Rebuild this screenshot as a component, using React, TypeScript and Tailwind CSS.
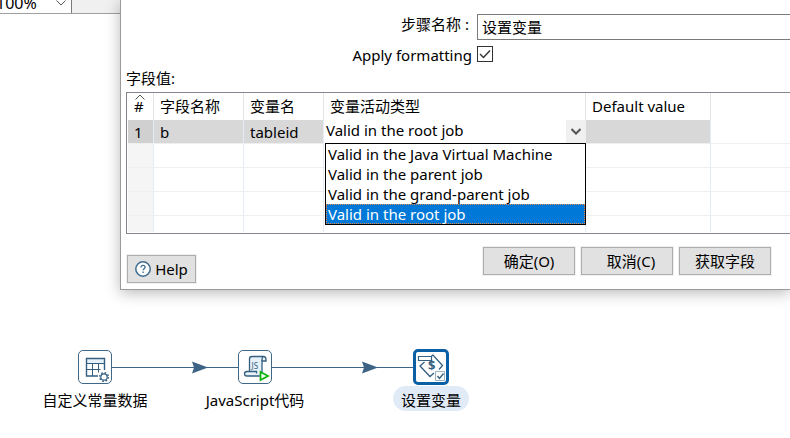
import type { ReactNode } from "react";

const scopes = [
  "Valid in the Java Virtual Machine",
  "Valid in the parent job",
  "Valid in the grand-parent job",
  "Valid in the root job",
];

const headCell = "relative border-r border-[#e5e5e5] px-[6px] pb-px text-left font-normal";
const bodyCell = "border-r border-b border-r-[#e6ecf3] border-b-[#efefef] px-[6px]";
const button =
  "flex h-7 items-center justify-center border border-[#adadad] bg-[#e1e1e1] outline outline-1 outline-[#f0f0f0]";

function VariablesTable() {
  return (
    <div className="h-[142px] border border-r-0 border-[#828790] pl-px">
      <table className="w-full table-fixed border-separate border-spacing-0">
        <colgroup>
          <col className="w-[26px]" />
          <col className="w-[90px]" />
          <col className="w-[80px]" />
          <col className="w-[262px]" />
          <col className="w-[125px]" />
          <col />
        </colgroup>
        <thead>
          <tr className="h-[27px]">
            <th className={headCell}>
              <svg className="absolute top-0 left-[6px] h-2 w-3" viewBox="0 0 12 8" fill="none" stroke="#555">
                <path d="M1.500 6.500 6 2l4.500 4.500" />
              </svg>
              #
            </th>
            <th className={headCell}>字段名称</th>
            <th className={headCell}>变量名</th>
            <th className={headCell}>变量活动类型</th>
            <th className={headCell}>Default value</th>
            <th />
          </tr>
        </thead>
        <tbody>
          <tr className="h-6">
            <td className={`${bodyCell} bg-[#d0d0d0]`}>1</td>
            <td className={`${bodyCell} bg-[#d8d8d8]`}>b</td>
            <td className={`${bodyCell} bg-[#d8d8d8]`}>tableid</td>
            <td className="relative p-0">
              <select
                aria-label="变量活动类型"
                defaultValue={scopes[3]}
                className="block h-6 w-full appearance-none bg-white pb-1 pl-[2px] outline-none"
              >
                {scopes.map((s) => (
                  <option key={s}>{s}</option>
                ))}
              </select>
              <span className="pointer-events-none absolute top-0 right-0 flex h-[23px] w-5 items-center justify-center bg-[#f0f0f0]">
                <svg className="h-[7px] w-[10px]" viewBox="0 0 10 7" fill="none" stroke="#555" strokeWidth="2">
                  <path d="M.5 1 5 5.500 9.500 1" />
                </svg>
              </span>
              <ul
                role="listbox"
                aria-label="变量活动类型"
                className="absolute top-[23px] right-0 left-px z-10 border border-black bg-white"
              >
                {scopes.map((s, i) => (
                  <li
                    key={s}
                    role="option"
                    aria-selected={i === 3}
                    className={
                      i === 3
                        ? "flex h-5 items-center border border-dotted border-[#e08a45] bg-[#0078d7] pl-px text-white"
                        : "flex h-5 items-center pl-[2px]"
                    }
                  >
                    {s}
                  </li>
                ))}
              </ul>
            </td>
            <td className={`${bodyCell} bg-[#d8d8d8]`} />
            <td className="border-b border-[#efefef]" />
          </tr>
          {[0, 1, 2].map((r) => (
            <tr key={r} className="h-6">
              <td className={`${bodyCell} bg-[#f5f5f5]`} />
              <td className={bodyCell} />
              <td className={bodyCell} />
              <td className={bodyCell} />
              <td className={bodyCell} />
              <td className="border-b border-[#efefef]" />
            </tr>
          ))}
          <tr className="h-4">
            <td className="border-r border-[#e6ecf3] bg-[#f5f5f5]" />
            <td className="border-r border-[#e6ecf3]" />
            <td className="border-r border-[#e6ecf3]" />
            <td className="border-r border-[#e6ecf3]" />
            <td className="border-r border-[#e6ecf3]" />
            <td />
          </tr>
        </tbody>
      </table>
    </div>
  );
}

function Dialog() {
  return (
    <section
      aria-label="设置变量"
      className="absolute top-0 right-0 left-[120px] border-b border-l border-[#9a9a9a] bg-white pt-[14px] pb-[6px] pl-[5px] shadow-[0_3px_14px_rgba(0,0,0,0.28)]"
    >
      <div className="grid grid-cols-[346px_1fr] gap-x-[5px] gap-y-[5px]">
        <label htmlFor="step" className="pr-[3px] text-right leading-[20px]">
          步骤名称 :
        </label>
        <input
          id="step"
          defaultValue="设置变量"
          className="h-[26px] min-w-0 border border-r-0 border-[#7a7a7a] bg-white px-1 pb-px outline-none"
        />
        <label htmlFor="format" className="text-right leading-[20px]">
          Apply formatting
        </label>
        <span className="relative mt-px h-4 w-4">
          <input
            id="format"
            type="checkbox"
            defaultChecked
            className="block h-4 w-4 appearance-none border border-[#333] bg-white"
          />
          <svg className="pointer-events-none absolute inset-0 h-4 w-4" viewBox="0 0 16 16" fill="none" stroke="#333" strokeWidth="1.400">
            <path d="m3 8 3.500 3.500L13 4.500" />
          </svg>
        </span>
      </div>
      <h2 className="mt-[3px] mb-1 leading-[20px]">字段值:</h2>
      <VariablesTable />
      <div className="flex items-start pt-[13px]">
        <button className={`${button} mt-2 ml-px w-[69px] gap-1`}>
          <svg className="h-4 w-4" viewBox="0 0 16 16" fill="none" stroke="#3d6b8f">
            <circle cx="8" cy="8" r="7.200" fill="#fff" strokeWidth="1.500" />
            <path d="M5.900 6.400c0-1.300.9-2.100 2.100-2.100s2.100.8 2.100 1.900c0 1.500-2 1.500-2 3.100M8.100 10.600v1.400" strokeWidth="1.300" />
          </svg>
          Help
        </button>
        <div className="ml-[287px] flex gap-[6px]">
          <button className={`${button} w-[92px]`}>确定(O)</button>
          <button className={`${button} w-[92px] pl-2`}>取消(C)</button>
          <button className={`${button} w-[92px]`}>获取字段</button>
        </div>
      </div>
    </section>
  );
}

function Step({ place, label, selected, children }: { place: string; label: string; selected?: boolean; children: ReactNode }) {
  return (
    <div className={`absolute flex w-[120px] flex-col items-center ${place}`}>
      <div
        className={
          selected
            ? "flex h-9 w-9 items-center justify-center rounded-[5px] border-[3px] border-[#0a5fa5] bg-white"
            : "my-px flex h-[34px] w-[34px] items-center justify-center rounded-[5px] border border-[#3f6886] bg-white"
        }
      >
        {children}
      </div>
      <span
        className={
          selected
            ? "mt-px flex h-[25px] items-center rounded-full bg-[#e1ebf7] px-2 pt-[2px] whitespace-nowrap"
            : "mt-px flex h-[25px] items-center px-2 pt-[2px] whitespace-nowrap"
        }
      >
        {label}
      </span>
    </div>
  );
}

function Hops() {
  return (
    <svg className="absolute top-[360px] left-[112px] h-[14px] w-[302px]" viewBox="0 0 302 14" fill="#3d6484">
      <path d="M0 7.500h126M160 7.500h142" stroke="#3d6484" />
      <path d="M80 1.500 96 7.500 80 13.500 82 7.500ZM250 1.500 266 7.500 250 13.500 252 7.500Z" />
    </svg>
  );
}

export default function App() {
  return (
    <main className="relative min-h-screen overflow-hidden bg-white font-['Noto_Sans','Noto_Sans_CJK_SC',sans-serif] text-[15px] leading-[20px] text-black">
      <header className="flex h-[14px] items-end border-b border-[#a0a0a0] bg-[#f0f0f0]">
        <div className="relative flex h-[13px] w-[72px] items-end overflow-hidden border-r border-[#7a7a7a] bg-white">
          <select aria-label="Zoom" className="-ml-1 h-[22px] w-full appearance-none pb-px text-base outline-none">
            <option>100%</option>
          </select>
          <svg className="pointer-events-none absolute right-[5px] bottom-[7px] h-[6px] w-[10px]" viewBox="0 0 10 6" fill="none" stroke="#555">
            <path d="M.5.5 5 5 9.500.5" />
          </svg>
        </div>
      </header>
      <Dialog />
      <Hops />
      <Step place="top-[349px] left-[35px]" label="自定义常量数据">
        <svg className="h-8 w-8" viewBox="0 0 32 32" fill="none" stroke="#345f82">
          <path d="M7.500 7.500h18v5h-18z" fill="#e6f1f8" />
          <path d="M19 25H7.500V7.500h18V19" strokeWidth="1.400" />
          <path d="M7.500 12.500h18M7.500 18.500h14M13.500 12.500V25M19.500 12.500v9" />
          <circle cx="25" cy="26" r="3.200" fill="#fff" strokeWidth="1.200" />
          <circle cx="25" cy="26" r="4.300" strokeDasharray="1.600 1.780" strokeWidth="1.500" />
        </svg>
      </Step>
      <Step place="top-[349px] left-[195px]" label="JavaScript代码">
        <svg className="h-8 w-8" viewBox="0 0 32 32" fill="none" stroke="#345f82" strokeWidth="1.300">
          <path d="M10.500 20.500V8q0-2.500 2.500-2.500h11.500q2.500 0 2.500 3v1.500h-4V21q0 4-3 4H8q-2.500 0-2.500-2.200T8 20.500h9.500v2" fill="#e6f1f8" />
          <path d="M23 10V8.500q0-2.500 1.500-3" />
          <text x="12.500" y="17.500" fontSize="8" fill="#345f82" stroke="none">JS</text>
          <path d="M21.500 21v8l7.500-4z" fill="#fff" stroke="#0cb10c" strokeWidth="1.700" />
        </svg>
      </Step>
      <Step place="top-[349px] left-[371px]" label="设置变量" selected>
        <svg className="h-[30px] w-[30px] shrink-0" viewBox="0 0 30 30" fill="none" stroke="#345f82">
          <path d="M2.500 4.500h13v4h-13z" strokeWidth="1.200" />
          <path d="M15.500 4 17 3l9.500 10.500-3.500 4M8.500 10 4 14l10 10.500 4-3.500" strokeWidth="1.300" />
          <text x="12" y="18" fontSize="13" fontWeight="700" fill="#345f82" stroke="none">$</text>
          <path d="M19.500 19.500h9v9h-9z" fill="#fff" stroke="#9ab0c0" />
          <path d="m21.500 24 2 2.500 4-5" strokeWidth="1.400" />
        </svg>
      </Step>
    </main>
  );
}
